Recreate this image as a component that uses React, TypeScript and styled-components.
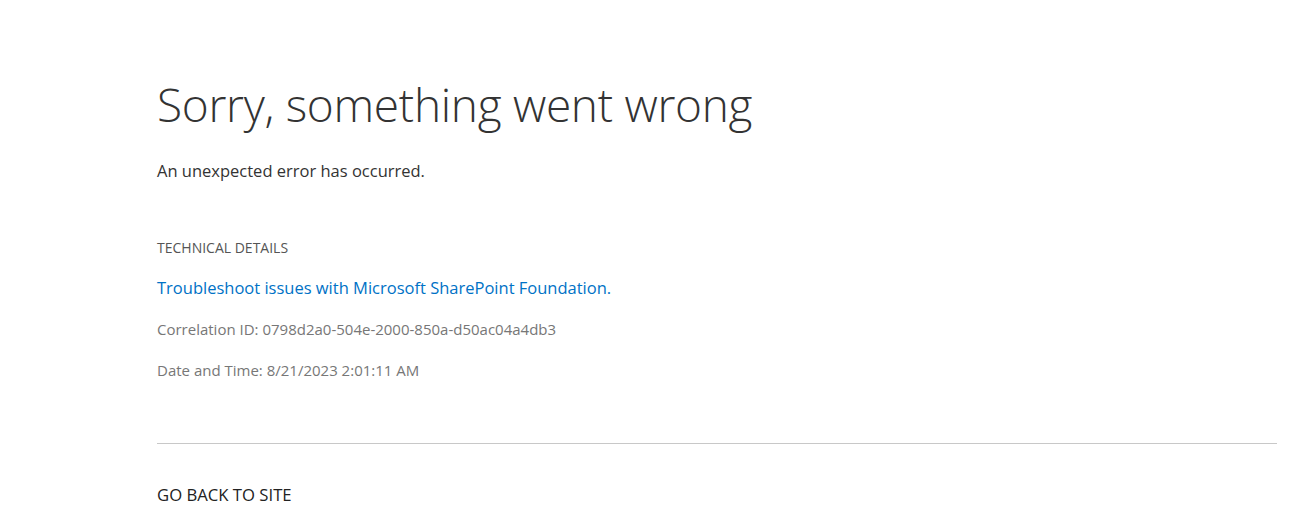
import React from "react";
import styled, { createGlobalStyle } from "styled-components";

const GlobalStyle = createGlobalStyle`
  html, body {
    margin: 0;
    padding: 0;
    background: #ffffff;
  }
  body {
    font-family: "Open Sans", "Noto Sans", sans-serif;
    color: #333333;
  }
`;

const Page = styled.div`
  padding: 72px 37px 0 157px;
`;

const Title = styled.h1`
  margin: 0;
  font-size: 46px;
  font-weight: 300;
  line-height: 64px;
  color: #333333;
  letter-spacing: -0.3px;
`;

const Message = styled.p`
  margin: 23px 0 0;
  font-size: 16.5px;
  line-height: 24px;
  color: #333333;
`;

const Details = styled.div`
  display: flex;
  flex-direction: column;
  margin-top: 55px;
`;

const SectionLabel = styled.div`
  font-size: 14px;
  line-height: 20px;
  color: #555555;
  text-transform: uppercase;
`;

const HelpLink = styled.a`
  margin-top: 19px;
  font-size: 16.5px;
  line-height: 22px;
  color: #0072c6;
  text-decoration: none;
`;

const Info = styled.div`
  margin-top: 19px;
  font-size: 15px;
  line-height: 22px;
  color: #777777;
`;

const Divider = styled.hr`
  margin: 62px 0 0;
  border: 0;
  border-top: 1px solid #c8c8c8;
`;

const BackLink = styled.a`
  display: inline-block;
  margin-top: 40px;
  font-size: 16.7px;
  line-height: 22px;
  color: #222222;
  text-decoration: none;
  text-transform: uppercase;
`;

export default function App() {
  return (
    <>
      <GlobalStyle />
      <Page>
        <Title>Sorry, something went wrong</Title>
        <Message>An unexpected error has occurred.</Message>
        <Details>
          <SectionLabel>Technical Details</SectionLabel>
          <HelpLink href="#">Troubleshoot issues with Microsoft SharePoint Foundation.</HelpLink>
          <Info>Correlation ID: 0798d2a0-504e-2000-850a-d50ac04a4db3</Info>
          <Info>Date and Time: 8/21/2023 2:01:11 AM</Info>
        </Details>
        <Divider />
        <BackLink href="#">Go back to site</BackLink>
      </Page>
    </>
  );
}
